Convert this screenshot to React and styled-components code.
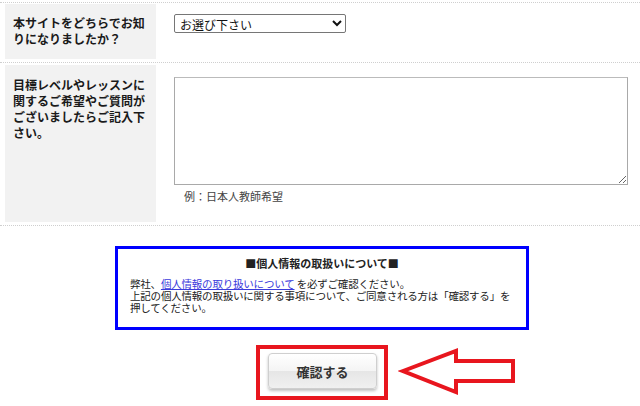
import styled, { createGlobalStyle } from "styled-components";

const GlobalStyle = createGlobalStyle`
  body {
    margin: 0;
    background: #fff;
    font-family: "Noto Sans CJK JP", "Liberation Sans", sans-serif;
    color: #222;
  }
`;

function App() {
  return (
    <>
      <GlobalStyle />
      <StForm>
        <StRow>
          <StLabel $top={11}>本サイトをどちらでお知りになりましたか？</StLabel>
          <StField $top={10}>
            <StSelect defaultValue="">
              <option value="">お選び下さい</option>
            </StSelect>
          </StField>
        </StRow>
        <StRow>
          <StLabel $top={12}>
            目標レベルやレッスンに関するご希望やご質問がございましたらご記入下さい。
          </StLabel>
          <StField $top={12}>
            <StTextarea />
            <StNote>例：日本人教師希望</StNote>
          </StField>
        </StRow>

        <StLower>
          <StPrivacy>
            <StPrivacyTitle>■個人情報の取扱いについて■</StPrivacyTitle>
            <StPrivacyText>
              弊社、<StLink href="#">個人情報の取り扱いについて</StLink> を必ずご確認ください。
              <br />
              上記の個人情報の取扱いに関する事項について、ご同意される方は「確認する」を押してください。
            </StPrivacyText>
          </StPrivacy>

          <StButtonArea>
            <StRedFrame>
              <StSubmit type="button">確認する</StSubmit>
            </StRedFrame>
            <StArrow width="122" height="50" viewBox="0 0 122 50">
              <polygon
                points="5,23 58,3 58,13 115,13 115,33 58,33 58,44"
                fill="none"
                stroke="#e8161e"
                strokeWidth="4"
                strokeLinejoin="miter"
              />
            </StArrow>
          </StButtonArea>
        </StLower>
      </StForm>
    </>
  );
}

export default App;

const StForm = styled.div`
  width: 100%;
  margin-top: 2px;
  border-top: 1px dotted #cfcfcf;
`;

const StRow = styled.div`
  display: flex;
  align-items: stretch;
  padding: 1px 0 3px;
  border-bottom: 1px dotted #cfcfcf;

  & + & {
    padding-top: 2px;
  }
`;

const StLabel = styled.div`
  flex: 0 0 135px;
  margin-left: 5px;
  padding: ${(p) => p.$top || 10}px 8px 12px;
  background-color: #f2f2f2;
  font-size: 12px;
  font-weight: bold;
  line-height: 16px;
  color: #1a1a1a;
  word-break: break-all;
`;

const StField = styled.div`
  flex: 1;
  display: flex;
  flex-direction: column;
  align-items: flex-start;
  padding: ${(p) => p.$top}px 12px 0 18px;
`;

const StSelect = styled.select`
  box-sizing: border-box;
  width: 172px;
  height: 19px;
  padding: 0 0 0 1px;
  font-family: "Noto Sans CJK JP", sans-serif;
  font-size: 12px;
  color: #111;
  border: 1px solid #767676;
  border-radius: 2px;
  background: #fff;
`;

const StTextarea = styled.textarea`
  box-sizing: border-box;
  width: 100%;
  height: 108px;
  border: 1px solid #a9a9a9;
  border-top-color: #bbb;
  resize: both;
  font-family: "Noto Sans CJK JP", sans-serif;
`;

const StNote = styled.p`
  margin: 4px 0 18px 10px;
  font-size: 11px;
  line-height: 15px;
  color: #444;
`;

const StLower = styled.div`
  display: flex;
  flex-direction: column;
  align-items: center;
  padding: 20px 0 0 4px;
`;

const StPrivacy = styled.div`
  box-sizing: border-box;
  width: 414px;
  padding: 6px 12px 13px;
  border: 3px solid #0000ff;
  font-size: 11px;
  color: #222;
`;

const StPrivacyTitle = styled.p`
  margin: 0 0 7px;
  text-align: center;
  font-weight: bold;
  line-height: 16px;
`;

const StPrivacyText = styled.p`
  margin: 0;
  font-size: 10.5px;
  line-height: 12px;
  letter-spacing: -0.2px;
`;

const StLink = styled.a`
  color: #3b3bdc;
  text-decoration: underline;
`;

const StButtonArea = styled.div`
  position: relative;
  margin-top: 15px;
`;

const StRedFrame = styled.div`
  display: flex;
  padding: 4px 7px 7px 8px;
  border: 4px solid #e8161e;
`;

const StSubmit = styled.button`
  width: 109px;
  height: 36px;
  border: 1px solid #cfcfcf;
  border-radius: 4px;
  background: linear-gradient(#ffffff 0%, #f4f4f4 50%, #e6e6e6 51%, #f0f0f0 100%);
  box-shadow: 0 2px 3px rgba(0, 0, 0, 0.25);
  font-family: "Noto Sans CJK JP", sans-serif;
  font-size: 13px;
  font-weight: bold;
  color: #333;
  cursor: pointer;
`;

const StArrow = styled.svg`
  position: absolute;
  left: calc(100% + 10px);
  top: 3px;
`;
